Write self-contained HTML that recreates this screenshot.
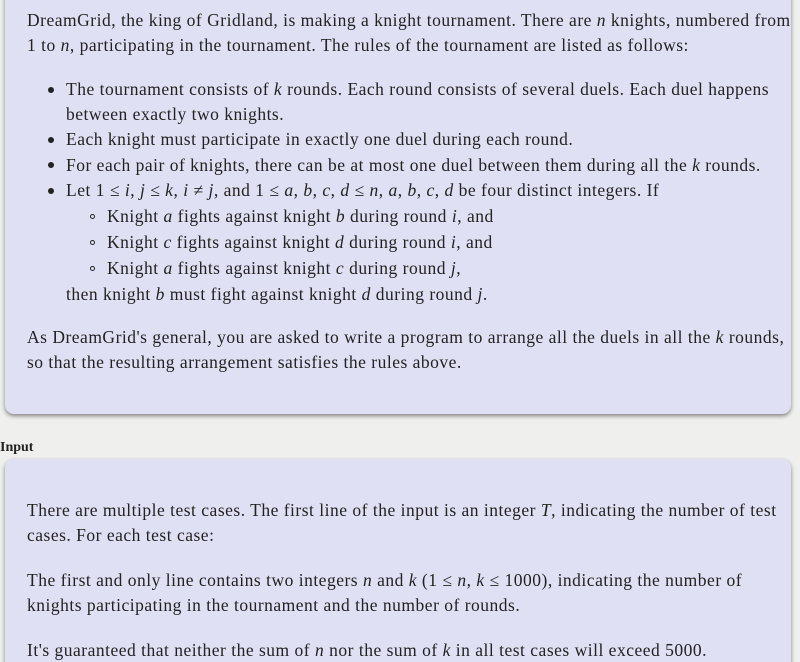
<!DOCTYPE html>
<html><head><meta charset="utf-8"><style>
html,body{margin:0;padding:0;width:800px;height:662px;overflow:hidden;background:#efefed;}
body{font-family:"Liberation Serif",serif;font-size:17.5px;color:#222;position:relative;letter-spacing:0.5px}
.p{position:absolute;background:#e0e0f4;border-radius:0 0 9px 9px;box-shadow:0 2px 4px rgba(0,0,0,0.45);}
.l{position:absolute;white-space:nowrap;line-height:20px}
i{font-style:italic}
.b{position:absolute;width:6px;height:6px;border-radius:50%;background:#222}
.c{position:absolute;width:5px;height:5px;border-radius:50%;border:1.3px solid #222;box-sizing:border-box}
</style></head><body>
<div class="p" style="left:5px;top:-10px;width:786px;height:424px"></div>
<div class="p" style="left:5px;top:459px;width:786px;height:230px;border-radius:9px"></div>
<div class="l" style="left:27px;top:10px">DreamGrid, the king of Gridland, is making a knight tournament. There are <i>n</i> knights, numbered from</div>
<div class="l" style="left:27px;top:35px">1 to <i>n</i>, participating in the tournament. The rules of the tournament are listed as follows:</div>
<div class="b" style="left:48px;top:87px"></div>
<div class="l" style="left:66px;top:79px">The tournament consists of <i>k</i> rounds. Each round consists of several duels. Each duel happens</div>
<div class="l" style="left:66px;top:104px">between exactly two knights.</div>
<div class="b" style="left:48px;top:137px"></div>
<div class="l" style="left:66px;top:129px">Each knight must participate in exactly one duel during each round.</div>
<div class="b" style="left:48px;top:162px"></div>
<div class="l" style="left:66px;top:155px">For each pair of knights, there can be at most one duel between them during all the <i>k</i> rounds.</div>
<div class="b" style="left:48px;top:188px"></div>
<div class="l" style="left:66px;top:180px">Let 1 ≤ <i>i</i>, <i>j</i> ≤ <i>k</i>, <i>i</i> ≠ <i>j</i>, and 1 ≤ <i>a</i>, <i>b</i>, <i>c</i>, <i>d</i> ≤ <i>n</i>, <i>a</i>, <i>b</i>, <i>c</i>, <i>d</i> be four distinct integers. If</div>
<div class="c" style="left:90px;top:214px"></div>
<div class="l" style="left:107px;top:206px">Knight <i>a</i> fights against knight <i>b</i> during round <i>i</i>, and</div>
<div class="c" style="left:90px;top:240px"></div>
<div class="l" style="left:107px;top:232px">Knight <i>c</i> fights against knight <i>d</i> during round <i>i</i>, and</div>
<div class="c" style="left:90px;top:266px"></div>
<div class="l" style="left:107px;top:258px">Knight <i>a</i> fights against knight <i>c</i> during round <i>j</i>,</div>
<div class="l" style="left:66px;top:284px">then knight <i>b</i> must fight against knight <i>d</i> during round <i>j</i>.</div>
<div class="l" style="left:27px;top:327px">As DreamGrid's general, you are asked to write a program to arrange all the duels in all the <i>k</i> rounds,</div>
<div class="l" style="left:27px;top:352px">so that the resulting arrangement satisfies the rules above.</div>
<div class="l" style="left:0px;top:438px;font-size:14px;font-weight:bold;letter-spacing:0">Input</div>
<div class="l" style="left:27px;top:500px">There are multiple test cases. The first line of the input is an integer <i>T</i>, indicating the number of test</div>
<div class="l" style="left:27px;top:525px">cases. For each test case:</div>
<div class="l" style="left:27px;top:570px">The first and only line contains two integers <i>n</i> and <i>k</i> (1 ≤ <i>n</i>, <i>k</i> ≤ 1000), indicating the number of</div>
<div class="l" style="left:27px;top:595px">knights participating in the tournament and the number of rounds.</div>
<div class="l" style="left:27px;top:640px">It's guaranteed that neither the sum of <i>n</i> nor the sum of <i>k</i> in all test cases will exceed 5000.</div>
</body></html>
